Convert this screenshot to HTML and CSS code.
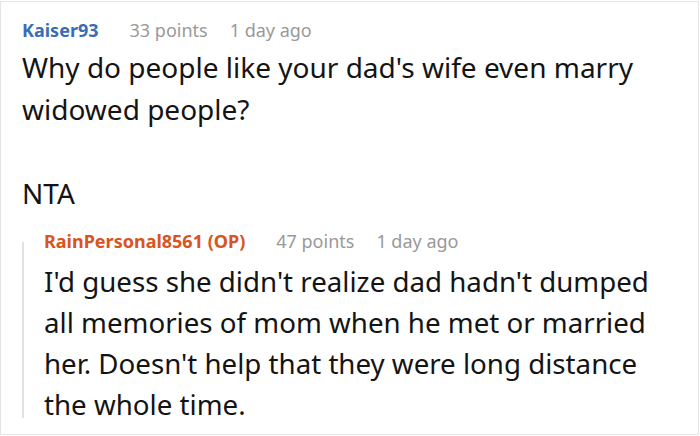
FILE: index.html
```html
<!DOCTYPE html>
<html>
<head>
<meta charset="utf-8">
<link rel="stylesheet" href="styles.css">
</head>
<body>
<div class="card">
  <div class="comment">
    <div class="meta">
      <span class="author">Kaiser93</span>
      <span class="info">33 points</span>
      <span class="info">1 day ago</span>
    </div>
    <div class="text">Why do people like your dad's wife even marry widowed people?<br><br>NTA</div>
    <div class="reply">
      <div class="rule"></div>
      <div class="reply-body">
        <div class="meta">
          <span class="author op">RainPersonal8561 (OP)</span>
          <span class="info">47 points</span>
          <span class="info">1 day ago</span>
        </div>
        <div class="text">I'd guess she didn't realize dad hadn't dumped all memories of mom when he met or married her. Doesn't help that they were long distance the whole time.</div>
      </div>
    </div>
  </div>
</div>
</body>
</html>
```
FILE: styles.css
```css
html, body {
  margin: 0;
  padding: 0;
  background: #fff;
}
body {
  font-family: "Noto Sans", "Open Sans", sans-serif;
  color: #141414;
}
.card {
  box-sizing: border-box;
  margin-top: 1px;
  width: 699px;
  height: 434px;
  border: 1px solid #e4e4e4;
  padding: 14px 20px 0 21px;
}
.meta {
  display: flex;
  gap: 22px;
  font-size: 18px;
  line-height: 28px;
}
.author {
  font-weight: 700;
  color: #3b6db5;
  margin-right: 9px;
}
.author.op {
  color: #d95420;
}
.info {
  color: #999;
}
.text {
  font-size: 28px;
  line-height: 42px;
  margin-top: 2px;
}
.reply {
  display: flex;
  margin-top: 13px;
}
.rule {
  flex: none;
  width: 2px;
  margin: 15px 20px 7px 0;
  background: #e2e2e2;
}
.reply-body {
  flex: 1;
}
.reply .text {
  font-size: 27.7px;
  line-height: 41.2px;
  margin-top: 5.5px;
}
```
